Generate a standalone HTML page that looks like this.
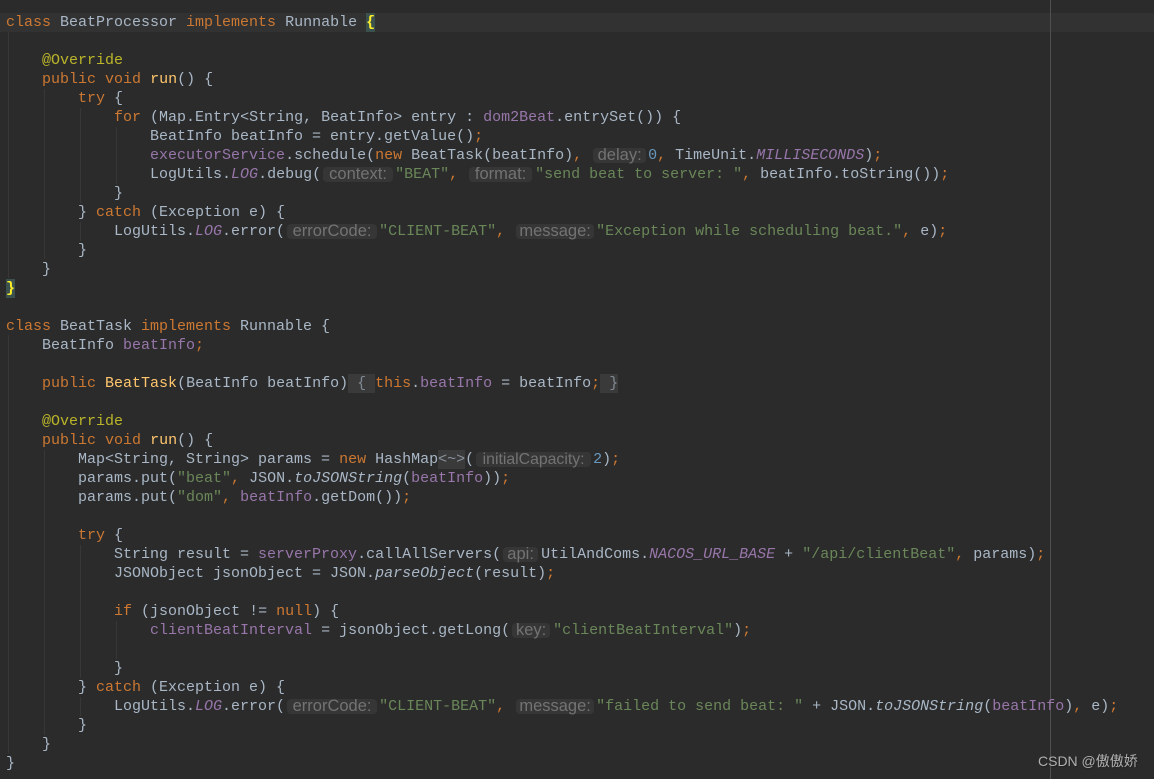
<!DOCTYPE html>
<html><head><meta charset="utf-8">
<style>
html,body{margin:0;padding:0;background:#2b2b2b;}
#w{position:relative;width:1154px;height:779px;overflow:hidden;background:#2b2b2b;}
.l{position:absolute;left:6px;height:19px;line-height:19px;white-space:pre;font:15px/19px "Liberation Mono",monospace;color:#a9b7c6;}
.cur{position:absolute;left:0;top:13px;width:1154px;height:19px;background:#323232;}
.g{position:absolute;width:1px;background:#373737;}
.m{position:absolute;left:1050px;top:0;width:1px;height:779px;background:#4f4f4f;}
i{font-style:italic}
.k{color:#cc7832}.s{color:#6a8759}.f{color:#9876aa}.a{color:#bbb529}.y{color:#ffc66d}.n{color:#6897bb}
.p{display:inline-block;height:15px;vertical-align:top;margin-top:2px;background:#363636;border-radius:4px;color:#737373;font:16.5px/15px "Liberation Sans",sans-serif;text-align:center;white-space:nowrap;}
.b{display:inline-block;background:#3b514d;color:#ffef28;font-weight:bold;width:9px;height:19px;vertical-align:top;}
.fb{background:#3a3a3a;display:inline-block;height:19px;vertical-align:top;color:#808a94}
#wm{position:absolute;left:1038px;top:752px;font:14px/18px "Liberation Sans","Noto Sans CJK SC",sans-serif;color:#b0b0b0;white-space:pre;text-shadow:1px 1px 1px #222;}
</style></head><body><div id="w">
<div class="cur"></div>
<div class="m"></div>
<div class="g" style="left:8px;top:32px;height:246px"></div>
<div class="g" style="left:8px;top:335px;height:418px"></div>
<div class="g" style="left:44px;top:89px;height:170px"></div>
<div class="g" style="left:44px;top:450px;height:285px"></div>
<div class="g" style="left:80px;top:108px;height:95px"></div>
<div class="g" style="left:80px;top:222px;height:19px"></div>
<div class="g" style="left:80px;top:545px;height:133px"></div>
<div class="g" style="left:80px;top:697px;height:19px"></div>
<div class="g" style="left:116px;top:127px;height:57px"></div>
<div class="g" style="left:116px;top:621px;height:38px"></div>

<div class="l" style="top:13px"><span class="k">class</span> BeatProcessor <span class="k">implements</span> Runnable <span class="b">{</span></div>
<div class="l" style="top:51px">    <span class="a">@Override</span></div>
<div class="l" style="top:70px">    <span class="k">public void</span> <span class="y">run</span>() {</div>
<div class="l" style="top:89px">        <span class="k">try</span> {</div>
<div class="l" style="top:108px">            <span class="k">for</span> (Map.Entry&lt;String, BeatInfo&gt; entry : <span class="f">dom2Beat</span>.entrySet()) {</div>
<div class="l" style="top:127px">                BeatInfo beatInfo = entry.getValue()<span class="k">;</span></div>
<div class="l" style="top:146px">                <span class="f">executorService</span>.schedule(<span class="k">new</span> BeatTask(beatInfo)<span class="k">,</span><span class="p" style="margin-left:11px;margin-right:2px;width:53px">delay:</span><span class="n">0</span><span class="k">,</span> TimeUnit.<i class="f">MILLISECONDS</i>)<span class="k">;</span></div>
<div class="l" style="top:165px">                LogUtils.<i class="f">LOG</i>.debug(<span class="p" style="margin-left:2px;margin-right:2px;width:70px">context:</span><span class="s">"BEAT"</span><span class="k">,</span><span class="p" style="margin-left:11px;margin-right:3px;width:63px">format:</span><span class="s">"send beat to server: "</span><span class="k">,</span> beatInfo.toString())<span class="k">;</span></div>
<div class="l" style="top:184px">            }</div>
<div class="l" style="top:203px">        } <span class="k">catch</span> (Exception e) {</div>
<div class="l" style="top:222px">            LogUtils.<i class="f">LOG</i>.error(<span class="p" style="margin-left:2px;margin-right:2px;width:90px">errorCode:</span><span class="s">"CLIENT-BEAT"</span><span class="k">,</span><span class="p" style="margin-left:11px;margin-right:2px;width:78px">message:</span><span class="s">"Exception while scheduling beat."</span><span class="k">,</span> e)<span class="k">;</span></div>
<div class="l" style="top:241px">        }</div>
<div class="l" style="top:260px">    }</div>
<div class="l" style="top:279px"><span class="b">}</span></div>
<div class="l" style="top:317px"><span class="k">class</span> BeatTask <span class="k">implements</span> Runnable {</div>
<div class="l" style="top:336px">    BeatInfo <span class="f">beatInfo</span><span class="k">;</span></div>
<div class="l" style="top:374px">    <span class="k">public</span> <span class="y">BeatTask</span>(BeatInfo beatInfo)<span class="fb" style="width:27px"> {</span><span class="k">this</span>.<span class="f">beatInfo</span> = beatInfo<span class="k">;</span><span class="fb" style="width:18px"> }</span></div>
<div class="l" style="top:412px">    <span class="a">@Override</span></div>
<div class="l" style="top:431px">    <span class="k">public void</span> <span class="y">run</span>() {</div>
<div class="l" style="top:450px">        Map&lt;String, String&gt; params = <span class="k">new</span> HashMap<span class="fb" style="width:27px;color:#8a949e">&lt;~&gt;</span>(<span class="p" style="margin-left:2px;margin-right:2px;width:115px;font-size:15.8px">initialCapacity:</span><span class="n">2</span>)<span class="k">;</span></div>
<div class="l" style="top:469px">        params.put(<span class="s">"beat"</span><span class="k">,</span> JSON.<i>toJSONString</i>(<span class="f">beatInfo</span>))<span class="k">;</span></div>
<div class="l" style="top:488px">        params.put(<span class="s">"dom"</span><span class="k">,</span> <span class="f">beatInfo</span>.getDom())<span class="k">;</span></div>
<div class="l" style="top:526px">        <span class="k">try</span> {</div>
<div class="l" style="top:545px">            String result = <span class="f">serverProxy</span>.callAllServers(<span class="p" style="margin-left:2px;margin-right:3px;width:35px">api:</span>UtilAndComs.<i class="f">NACOS_URL_BASE</i> + <span class="s">"/api/clientBeat"</span><span class="k">,</span> params)<span class="k">;</span></div>
<div class="l" style="top:564px">            JSONObject jsonObject = JSON.<i>parseObject</i>(result)<span class="k">;</span></div>
<div class="l" style="top:602px">            <span class="k">if</span> (jsonObject != <span class="k">null</span>) {</div>
<div class="l" style="top:621px">                <span class="f">clientBeatInterval</span> = jsonObject.getLong(<span class="p" style="margin-left:2px;margin-right:3px;width:38px">key:</span><span class="s">"clientBeatInterval"</span>)<span class="k">;</span></div>
<div class="l" style="top:659px">            }</div>
<div class="l" style="top:678px">        } <span class="k">catch</span> (Exception e) {</div>
<div class="l" style="top:697px">            LogUtils.<i class="f">LOG</i>.error(<span class="p" style="margin-left:2px;margin-right:2px;width:90px">errorCode:</span><span class="s">"CLIENT-BEAT"</span><span class="k">,</span><span class="p" style="margin-left:11px;margin-right:2px;width:78px">message:</span><span class="s">"failed to send beat: "</span> + JSON.<i>toJSONString</i>(<span class="f">beatInfo</span>)<span class="k">,</span> e)<span class="k">;</span></div>
<div class="l" style="top:716px">        }</div>
<div class="l" style="top:735px">    }</div>
<div class="l" style="top:754px">}</div>
<div id="wm">CSDN @傲傲娇</div>
</div></body></html>
